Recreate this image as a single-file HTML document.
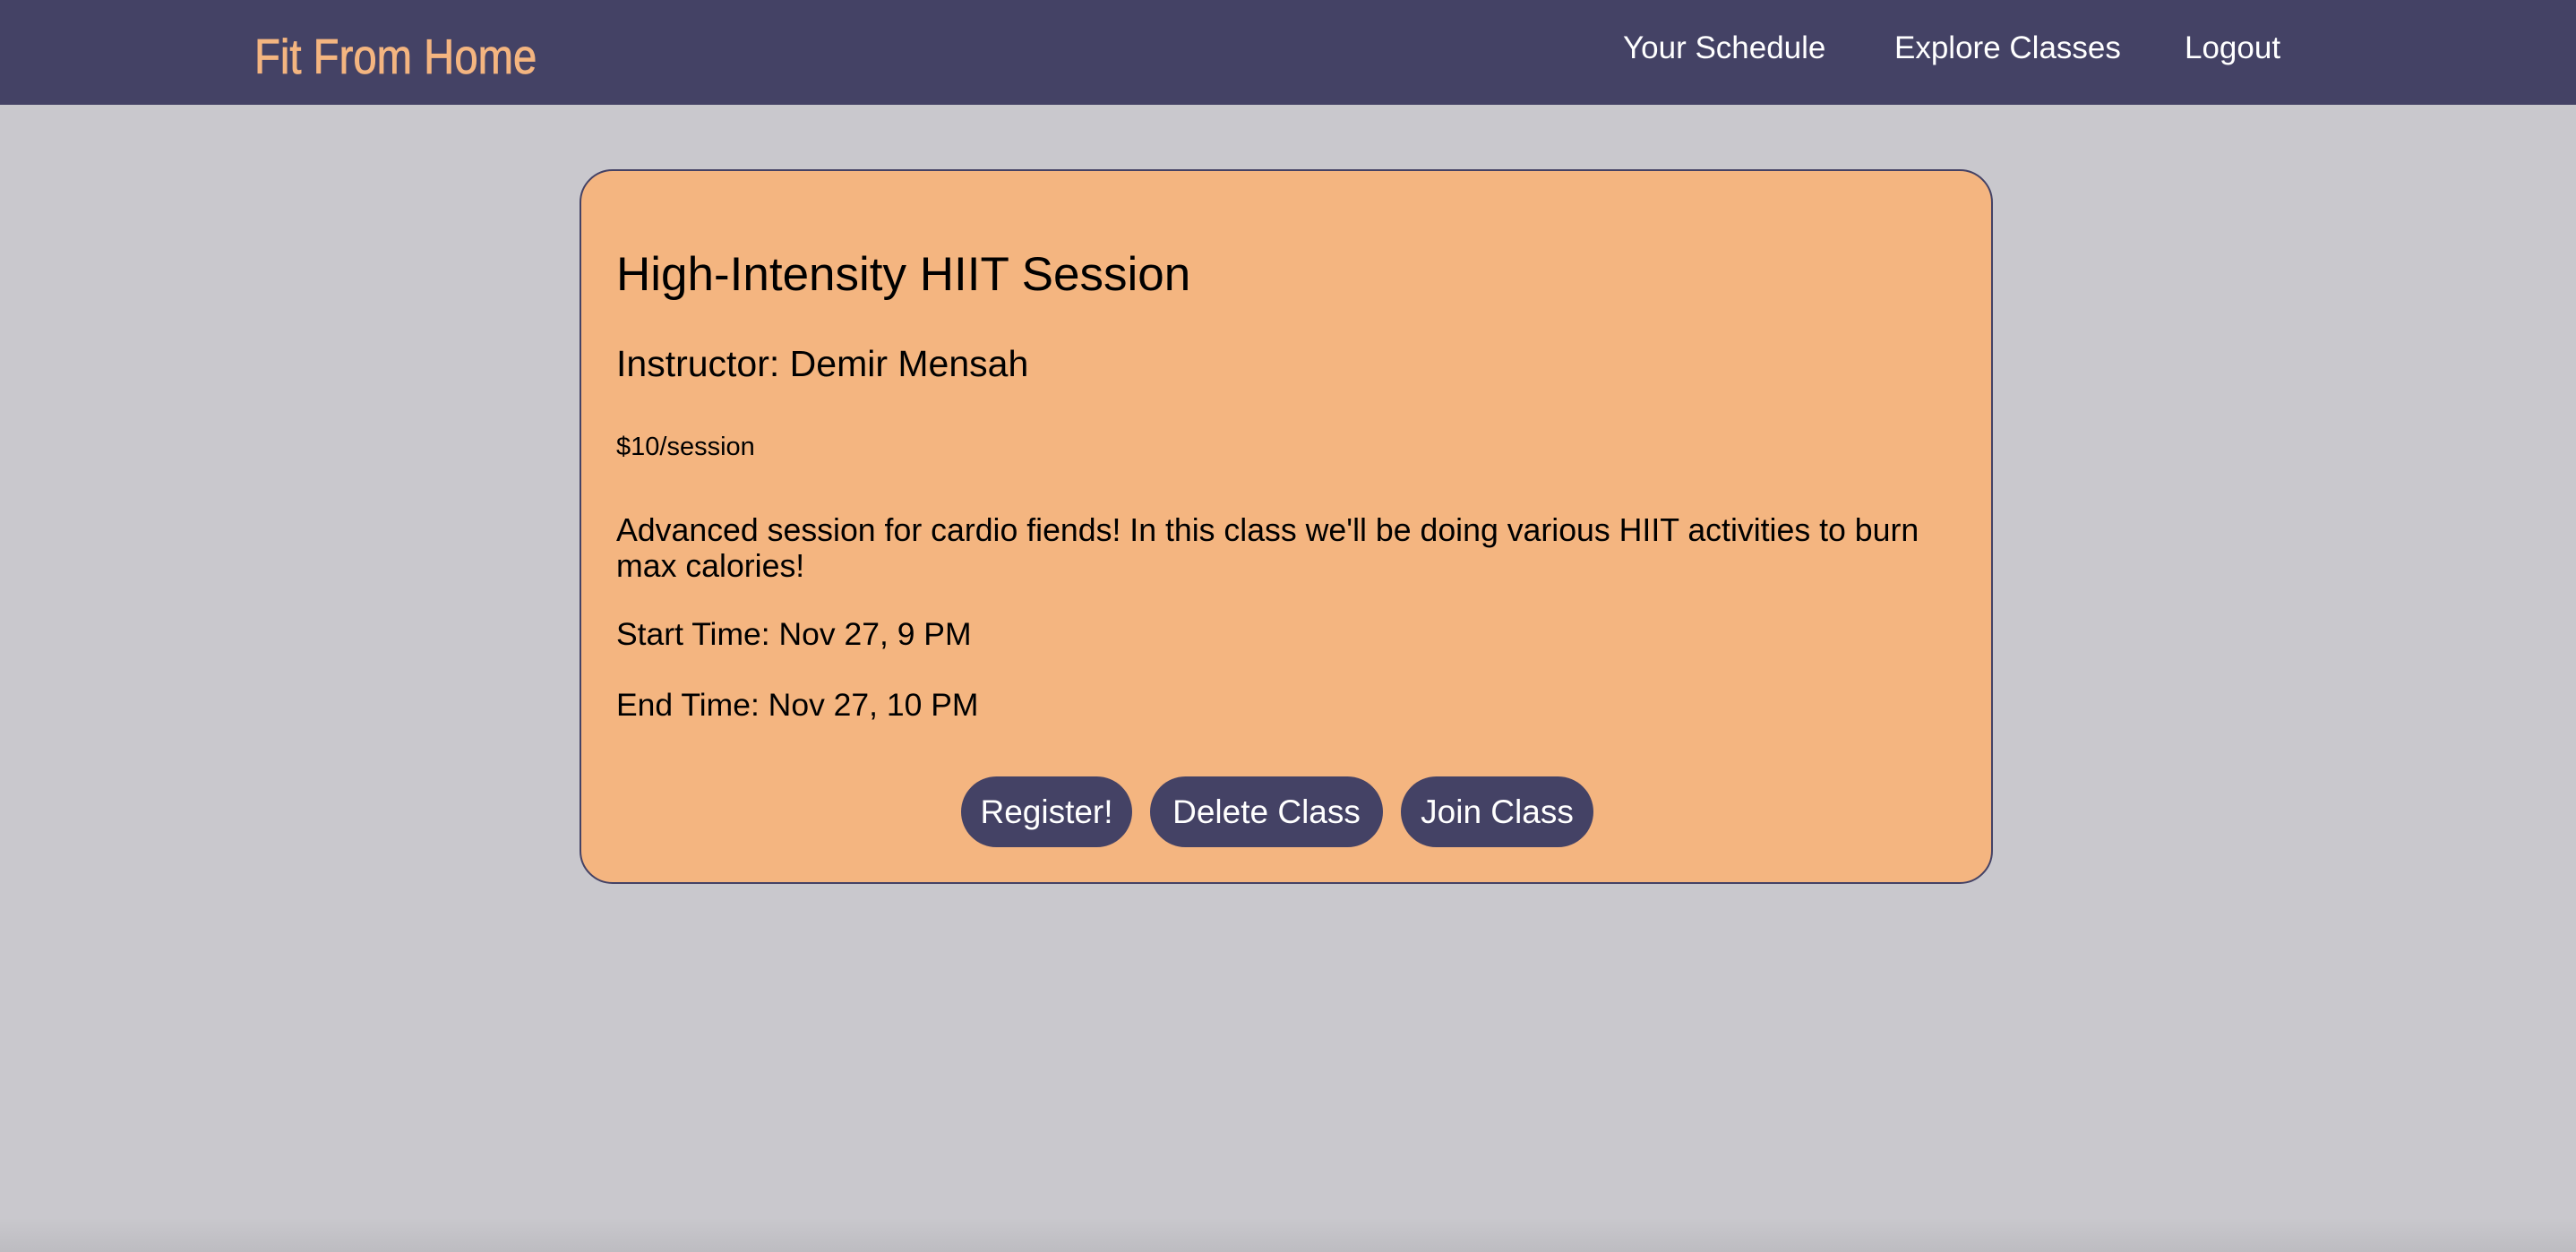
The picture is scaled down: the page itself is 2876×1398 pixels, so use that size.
<!DOCTYPE html>
<html><head><meta charset="utf-8"><style>
*{margin:0;padding:0;box-sizing:border-box}
html,body{width:2876px;height:1398px;overflow:hidden;background:#c9c8cd;font-family:"Liberation Sans",Arial,sans-serif}
.nav{position:absolute;left:0;top:0;width:2876px;height:117px;background:#444265}
.logo{position:absolute;left:284px;top:36px;font-size:55px;color:#f4b580;white-space:nowrap;transform:scaleX(0.86);transform-origin:left top;line-height:1;-webkit-text-stroke:0.8px #f4b580}
.nl{position:absolute;top:36px;font-size:35px;color:#fff;white-space:nowrap;line-height:1}
.card{position:absolute;left:647px;top:189px;width:1578px;height:798px;background:#f4b580;border:2px solid #444265;border-radius:37px}
.t{position:absolute;left:688px;white-space:nowrap;color:#000;line-height:1}
.btn{position:absolute;top:867px;height:79px;background:#444265;color:#fff;border-radius:40px;font-size:37px;display:flex;align-items:center;justify-content:center;white-space:nowrap}
.bot{position:absolute;left:0;top:1360px;width:2876px;height:38px;background:linear-gradient(#c9c8cd,#bdbcc1)}
</style></head><body>
<div class="nav">
<div class="logo">Fit From Home</div>
<div class="nl" style="left:1812px">Your Schedule</div>
<div class="nl" style="left:2115px">Explore Classes</div>
<div class="nl" style="left:2439px">Logout</div>
</div>
<div class="card"></div>
<div class="t" style="top:280px;font-size:53px">High-Intensity HIIT Session</div>
<div class="t" style="top:386px;font-size:41px">Instructor: Demir Mensah</div>
<div class="t" style="top:485px;font-size:29px">$10/session</div>
<div class="t" style="top:572px;font-size:35.7px;line-height:40px;white-space:normal;width:1500px">Advanced session for cardio fiends! In this class we'll be doing various HIIT activities to burn max calories!</div>
<div class="t" style="top:691px;font-size:35.5px">Start Time: Nov 27, 9 PM</div>
<div class="t" style="top:770px;font-size:35.5px">End Time: Nov 27, 10 PM</div>
<div class="btn" style="left:1073px;width:191px">Register!</div>
<div class="btn" style="left:1284px;width:260px">Delete Class</div>
<div class="btn" style="left:1564px;width:215px">Join Class</div>
<div class="bot"></div>
</body></html>
